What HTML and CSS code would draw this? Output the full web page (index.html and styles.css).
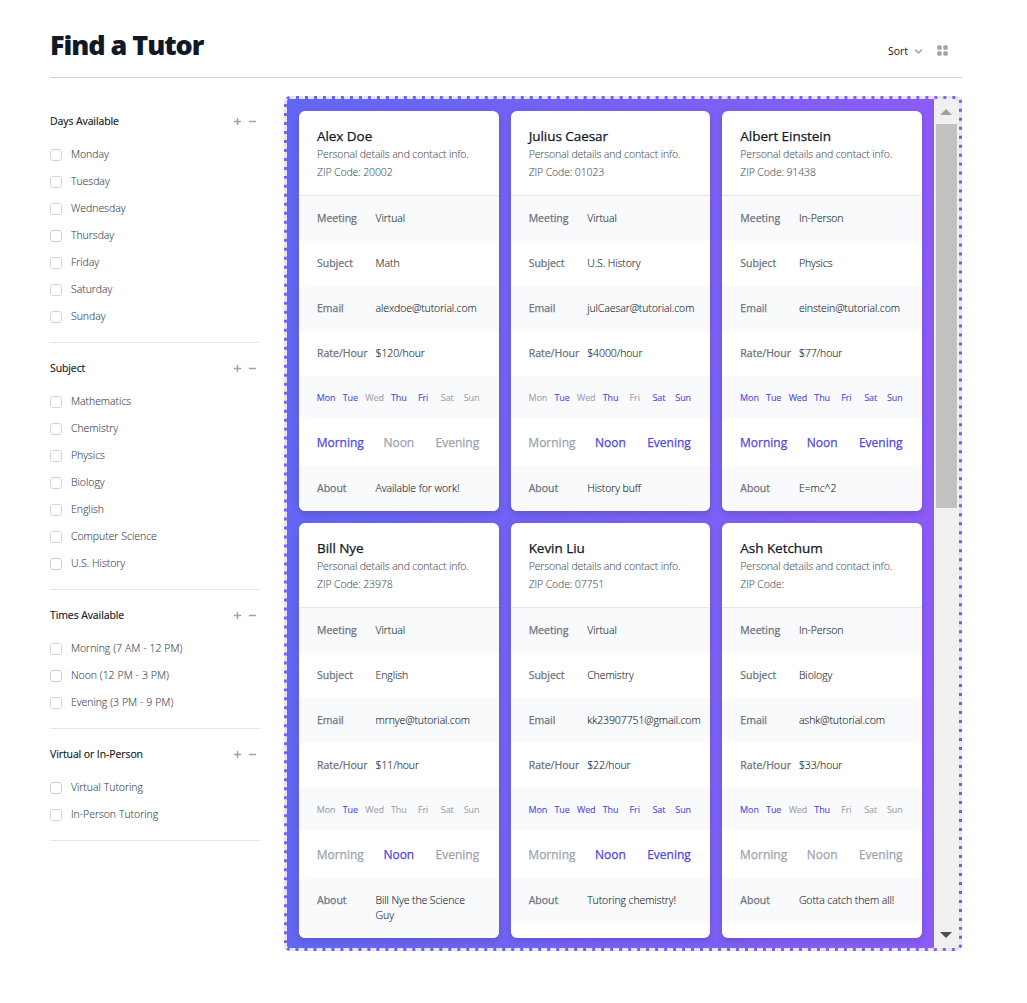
FILE: index.html
```html
<!DOCTYPE html>
<html lang="en">
<head>
<meta charset="utf-8">
<title>Find a Tutor</title>
<link rel="stylesheet" href="styles.css">
</head>
<body>
<main class="page">
  <header class="page-header">
    <h1 class="page-title">Find a Tutor</h1>
    <div class="tools">
      <button class="sort"><span class="sort-label">Sort</span>
        <svg class="icon" viewBox="0 0 20 20"><path fill-rule="evenodd" d="M5.293 7.293a1 1 0 011.414 0L10 10.586l3.293-3.293a1 1 0 111.414 1.414l-4 4a1 1 0 01-1.414 0l-4-4a1 1 0 010-1.414z"/></svg>
      </button>
      <button class="grid-view" aria-label="View grid">
        <svg class="icon" viewBox="0 0 20 20"><path d="M5 3a2 2 0 00-2 2v2a2 2 0 002 2h2a2 2 0 002-2V5a2 2 0 00-2-2H5zM5 11a2 2 0 00-2 2v2a2 2 0 002 2h2a2 2 0 002-2v-2a2 2 0 00-2-2H5zM11 5a2 2 0 012-2h2a2 2 0 012 2v2a2 2 0 01-2 2h-2a2 2 0 01-2-2V5zM11 13a2 2 0 012-2h2a2 2 0 012 2v2a2 2 0 01-2 2h-2a2 2 0 01-2-2v-2z"/></svg>
      </button>
    </div>
  </header>
  <div class="content">
    <form class="filters" id="filters"></form>
    <section class="results">
      <div class="cards" id="cards"></div>
      <div class="scrollbar"><i class="arrow up"></i><i class="thumb"></i><i class="arrow down"></i></div>
    </section>
  </div>
</main>
<script src="app.js"></script>
</body>
</html>
```
FILE: styles.css
```css
* { box-sizing: border-box; margin: 0; padding: 0; }
body { background: #fff; color: #111827; font-family: "Open Sans", "Noto Sans", sans-serif; font-size: 10.5px; line-height: 15px; }
button { background: none; border: 0; font: inherit; color: inherit; }
.icon { display: block; width: 15px; height: 15px; fill: #9ca3af; }
.page { width: 912px; margin-left: 50px; }
.page-header { display: flex; justify-content: space-between; height: 78px; padding-top: 31px; border-bottom: 1px solid #d1d5db; }
.page-title { font-size: 27px; line-height: 27px; font-weight: 800; letter-spacing: -1.05px; white-space: nowrap; }
.tools { display: flex; gap: 9px; padding: 11px 12px 0 0; height: 27px; }
.sort { display: flex; gap: 3px; height: 15px; color: #111827; }
.sort-label { padding-top: 2px; }
.sort .icon { margin-top: 2px; }
.content { display: grid; grid-template-columns: 210px 678px; gap: 24px; padding-top: 18px; }
.filter { padding: 18px 0; border-bottom: 1px solid #e5e7eb; }
.filter-head { display: flex; justify-content: space-between; align-items: center; height: 15px; margin-bottom: 18px; }
.filter-title { font-size: 10.5px; font-weight: 500; letter-spacing: -0.1px; -webkit-text-stroke: 0.15px; }
.toggles { display: flex; }
.options { display: grid; gap: 12px; }
.option { display: flex; gap: 9px; height: 15px; color: #374151; font-weight: 300; letter-spacing: -0.05px; word-spacing: 0.3px; white-space: nowrap; -webkit-text-stroke: 0.1px; }
.option input { appearance: none; width: 12px; height: 12px; margin-top: 2px; border: 1px solid #d1d5db; border-radius: 3px; background: #fff; }
.results { display: flex; height: 855px; overflow: hidden; border: 3px dashed #e5e7eb; border-radius: 6px; background: linear-gradient(to right, #6366f1, #8b5cf6); }
.cards { flex: 1; display: grid; grid-template-columns: repeat(3, minmax(0, 1fr)); grid-template-rows: 400px 415px; gap: 12px; padding: 12px; }
.card { overflow: hidden; border-radius: 6px; background: #fff; box-shadow: 0 3px 6px rgba(0,0,0,.14); }
.card-head { height: 85px; padding: 16px 18px 0; border-bottom: 1px solid #e5e7eb; line-height: 18px; font-weight: 300; letter-spacing: -0.13px; color: #4b5563; white-space: nowrap; -webkit-text-stroke: 0.1px; }
.name { font-size: 13.5px; line-height: 18px; font-weight: 500; letter-spacing: -0.05px; color: #111827; -webkit-text-stroke: 0.25px; }
.row { display: grid; grid-template-columns: repeat(3, minmax(0, 1fr)); gap: 12px; padding: 15px 18px; }
.shaded { background: #f9fafb; }
.term { font-weight: 500; color: #6b7280; white-space: nowrap; -webkit-text-stroke: 0.25px; }
.value { grid-column: span 2; color: #111827; font-weight: 300; letter-spacing: -0.1px; -webkit-text-stroke: 0.1px; }
.days { grid-template-columns: repeat(7, minmax(0, 1fr)); gap: 6px; height: 42px; padding-top: 16px; font-size: 9px; line-height: 12px; }
.times { height: 48px; padding-top: 16px; font-size: 12px; line-height: 18px; }
.slot { display: flex; justify-content: center; color: #9ca3af; white-space: nowrap; }
.slot.on { color: #4f46e5; }
.days .slot { letter-spacing: -0.1px; -webkit-text-stroke: 0.1px; }
.times .slot { font-weight: 500; -webkit-text-stroke: 0.25px; }
.scrollbar { display: flex; flex-direction: column; align-items: center; width: 25px; background: #f0f0f0; }
.arrow { width: 0; height: 0; border: 6px solid transparent; }
.up { border-top: 0; border-bottom-color: #a0a0a0; margin: 10px 1px 0 0; }
.down { border-bottom: 0; border-top-color: #505050; margin: auto 1px 10px 0; }
.thumb { width: 21px; height: 384px; margin-top: 9px; background: #c1c1c1; }
```
FILE: app.js
```js
const filters = [
  ['Days Available', ['Monday', 'Tuesday', 'Wednesday', 'Thursday', 'Friday', 'Saturday', 'Sunday']],
  ['Subject', ['Mathematics', 'Chemistry', 'Physics', 'Biology', 'English', 'Computer Science', 'U.S. History']],
  ['Times Available', ['Morning (7 AM - 12 PM)', 'Noon (12 PM - 3 PM)', 'Evening (3 PM - 9 PM)']],
  ['Virtual or In-Person', ['Virtual Tutoring', 'In-Person Tutoring']]
];
const days = ['Mon', 'Tue', 'Wed', 'Thu', 'Fri', 'Sat', 'Sun'];
const times = ['Morning', 'Noon', 'Evening'];
// Availability is a string of flags, one per day or time of day.
const tutors = [
  ['Alex Doe', '20002', 'Virtual', 'Math', 'alexdoe@tutorial.com', '$120', '1101100', '100', 'Available for work!'],
  ['Julius Caesar', '01023', 'Virtual', 'U.S. History', 'julCaesar@tutorial.com', '$4000', '0101011', '011', 'History buff'],
  ['Albert Einstein', '91438', 'In-Person', 'Physics', 'einstein@tutorial.com', '$77', '1111111', '111', 'E=mc^2'],
  ['Bill Nye', '23978', 'Virtual', 'English', 'mrnye@tutorial.com', '$11', '0100000', '010', 'Bill Nye the Science Guy'],
  ['Kevin Liu', '07751', 'Virtual', 'Chemistry', 'kk23907751@gmail.com', '$22', '1111111', '011', 'Tutoring chemistry!'],
  ['Ash Ketchum', '', 'In-Person', 'Biology', 'ashk@tutorial.com', '$33', '1101000', '000', 'Gotta catch them all!']
];
const plus = '<svg class="icon" viewBox="0 0 20 20"><path d="M10 5a1 1 0 011 1v3h3a1 1 0 110 2h-3v3a1 1 0 11-2 0v-3H6a1 1 0 110-2h3V6a1 1 0 011-1z"/></svg>';
const minus = '<svg class="icon" viewBox="0 0 20 20"><path d="M5 10a1 1 0 011-1h8a1 1 0 110 2H6a1 1 0 01-1-1z"/></svg>';

document.getElementById('filters').innerHTML = filters.map(([title, options]) =>
  `<div class="filter"><div class="filter-head"><h3 class="filter-title">${title}</h3><span class="toggles">${plus}${minus}</span></div>
  <div class="options">${options.map(o => `<label class="option"><input type="checkbox"><span>${o}</span></label>`).join('')}</div></div>`).join('');

const row = (term, value, shaded) =>
  `<div class="row ${shaded ? 'shaded' : ''}"><dt class="term">${term}</dt><dd class="value">${value}</dd></div>`;
const slots = (names, flags) =>
  names.map((n, i) => `<span class="slot ${flags[i] === '1' ? 'on' : ''}">${n}</span>`).join('');

document.getElementById('cards').innerHTML = tutors.map(([name, zip, meeting, subject, email, rate, d, t, about]) =>
  `<article class="card"><div class="card-head"><h2 class="name">${name}</h2><p>Personal details and contact info.</p><p>ZIP Code: ${zip}</p></div>
  <dl>${row('Meeting', meeting, true)}${row('Subject', subject)}${row('Email', email, true)}${row('Rate/Hour', rate + '/hour')}
  <div class="row days shaded">${slots(days, d)}</div><div class="row times">${slots(times, t)}</div>${row('About', about, true)}</dl></article>`).join('');
```
